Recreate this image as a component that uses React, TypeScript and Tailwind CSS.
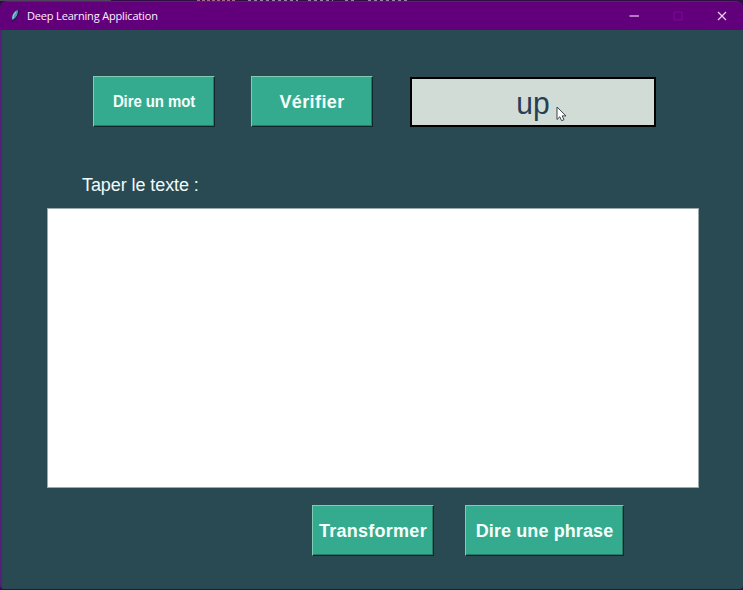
import React from "react";

type ActionProps = { label: string; box: string; text: string };

function ActionButton({ label, box, text }: ActionProps) {
  return (
    <button
      className={`flex shrink-0 items-center justify-center border border-t-[#82cbb5] border-l-[#82cbb5] border-r-[#10262b] border-b-[#10262b] bg-[#34ab8e] pt-0.5 font-bold whitespace-nowrap text-[#f4fffc] shadow-[inset_-1px_-1px_0_#287966] ${box}`}
    >
      <span className={text}>{label}</span>
    </button>
  );
}

function Feather() {
  return (
    <svg className="ml-2.5 h-3.5 w-[10px] shrink-0" viewBox="0 0 10 14">
      <path d="M8.500 .8C4.500 1.500 1.800 5.500 1.800 10l1.200 1.200C6.500 9 8.500 6 8.500 .8Z" fill="#5797b4" />
      <path d="M8.600 1C8.800 5 6.500 9.500 3 11.500l-.8 1.500" stroke="#201742" strokeWidth="1.300" fill="none" />
      <path d="M6 3C4 5 3 7 3 9.500" stroke="#a5d5e1" strokeWidth="1" fill="none" />
    </svg>
  );
}

function TitleBar() {
  return (
    <header className="flex h-[29px] items-center rounded-t-lg border-t border-[#70108a] bg-[#62007c] pb-px">
      <Feather />
      <h1 className="ml-[7px] font-['Open_Sans','Noto_Sans',sans-serif] text-[11px] leading-4 tracking-[-0.17px] whitespace-nowrap text-[#fdf0ff]">
        Deep Learning Application
      </h1>
      <div className="mr-4 ml-auto flex items-center gap-[34px]">
        <svg className="h-2.5 w-2.5" viewBox="0 0 10 10"><path d="M.5 5h9.500" stroke="#efc9f5" strokeWidth="1.200" /></svg>
        <svg className="h-2.5 w-2.5" viewBox="0 0 10 10"><rect x="1" y="1" width="8" height="8" rx="1" fill="none" stroke="#7d0898" strokeWidth="1.200" /></svg>
        <svg className="h-2.5 w-2.5" viewBox="0 0 10 10"><path d="m1 1 8 8M9 1 1 9" stroke="#f1d2f6" strokeWidth="1.200" /></svg>
      </div>
    </header>
  );
}

function Pointer() {
  return (
    <svg className="absolute top-[27px] left-[144px] h-4 w-3" viewBox="0 0 12 16">
      <path d="M1 1v12.500l2.800-2.700 1.800 3.900 2.400-1-1.800-3.800H10Z" fill="#fff" stroke="#39434a" strokeWidth="1" />
    </svg>
  );
}

export default function App() {
  return (
    <div className="h-[590px] w-[743px] overflow-hidden bg-[#301044] font-['Liberation_Sans',Arial,sans-serif]">
      <svg className="block h-px w-full" viewBox="0 0 743 1">
        <path d="M0 .5h111" stroke="#51425d" />
        <path d="M197 .5h39" stroke="#b0658f" strokeDasharray="3 2" />
        <path d="M248 .5h50m10 0h25m12 0h11m12 0h39" stroke="#a080b0" strokeDasharray="3 3" />
      </svg>
      <TitleBar />
      <main className="flex h-[559px] flex-col rounded-b border-l-2 border-[#552077] bg-[#294a53]">
        <div className="mt-[46px] ml-[91px] flex items-start">
          <ActionButton label="Dire un mot" box="h-[51px] w-[122px]" text="text-[15px] tracking-[-0.1px] scale-y-105" />
          <ActionButton label="Vérifier" box="ml-9 h-[51px] w-[122px]" text="text-[18px] tracking-[0.4px]" />
          <div className="relative mt-px ml-[37px] flex h-[50px] w-[246px] items-center justify-center border-2 border-black bg-[#d0dcd5] text-[#293d55]">
            <span className="mt-1 origin-[50%_80%] scale-y-105 text-[30px] leading-none">up</span>
            <Pointer />
          </div>
        </div>
        <label className="mt-[46px] ml-20 h-[35px] text-[18px] leading-6 tracking-[-0.08px] text-[#f3fafa]">Taper le texte :</label>
        <textarea className="ml-[45px] block h-[280px] w-[652px] shrink-0 resize-none border border-[#9aa9ac] bg-white outline-none" />
        <div className="mt-[17px] ml-[310px] flex">
          <ActionButton label="Transformer" box="h-[51px] w-[122px]" text="text-[18px] tracking-[0.25px]" />
          <ActionButton label="Dire une phrase" box="ml-[31px] h-[51px] w-[159px]" text="text-[18px] tracking-[0.1px]" />
        </div>
      </main>
    </div>
  );
}
